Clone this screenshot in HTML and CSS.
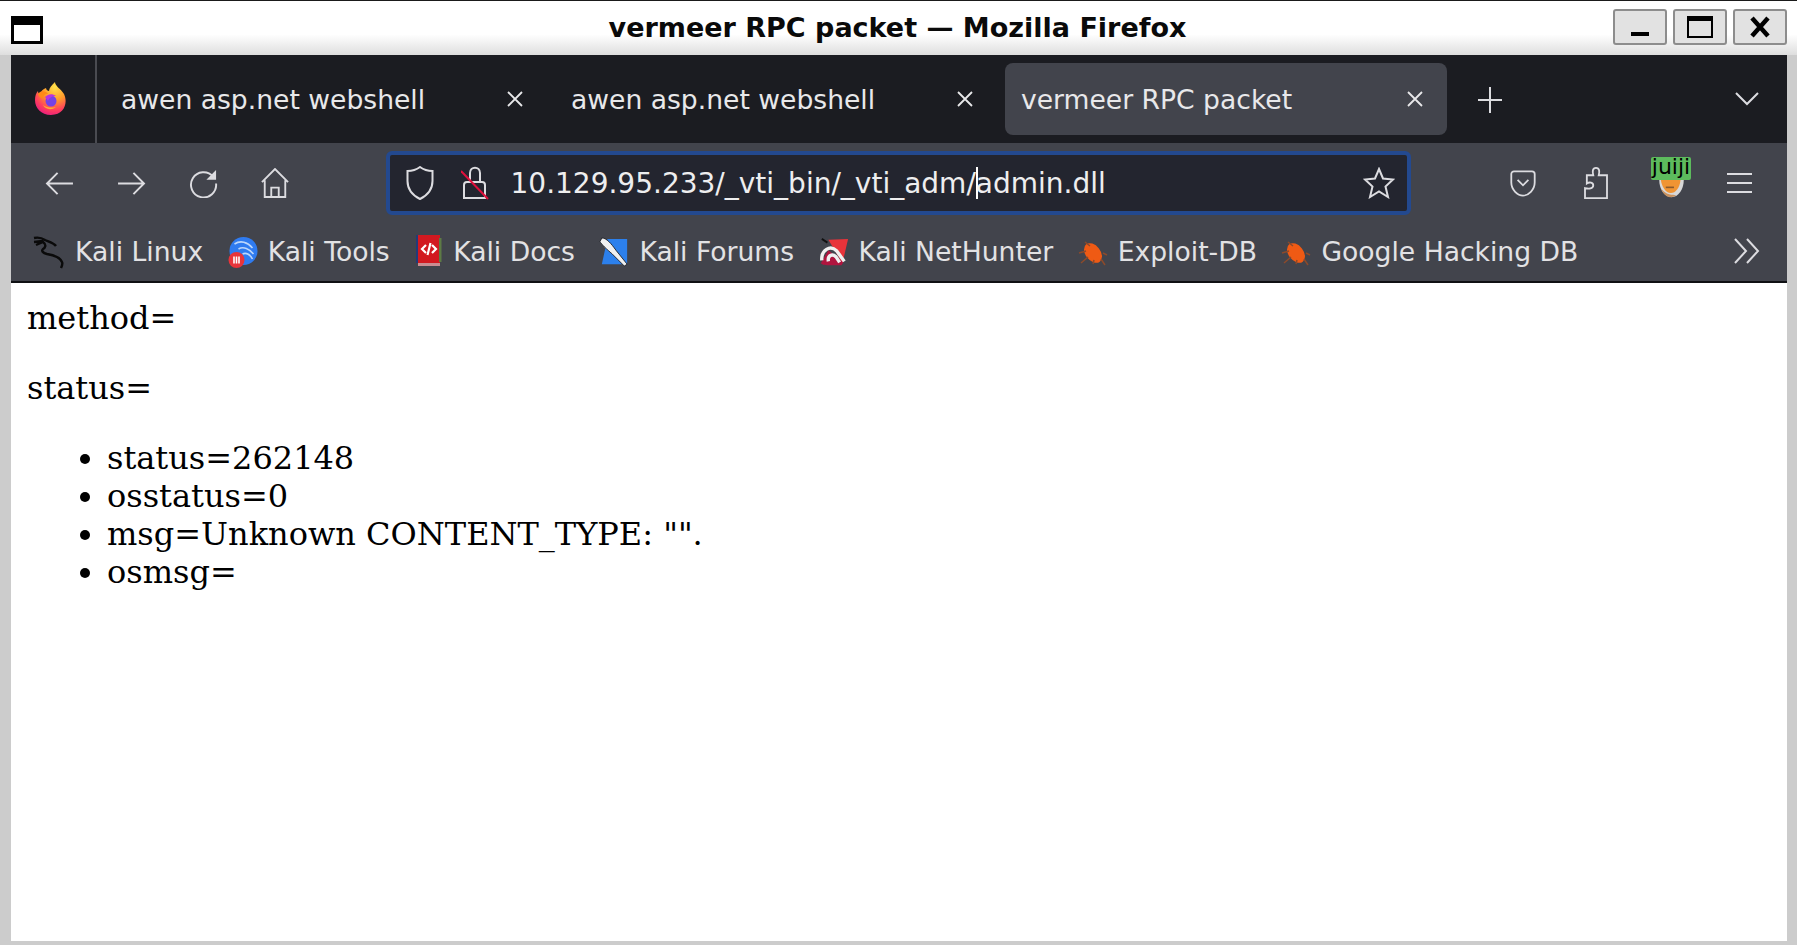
FILE: index.html
```html
<!DOCTYPE html>
<html lang="en">
<head>
<meta charset="utf-8">
<title>vermeer RPC packet — Mozilla Firefox</title>
<link rel="stylesheet" href="styles.css">
</head>
<body>
<header class="titlebar">
  <div class="win-menu"></div>
  <div class="win-title">vermeer RPC packet — Mozilla Firefox</div>
  <div class="win-buttons">
    <button class="win-btn"><span class="g-min"></span></button>
    <button class="win-btn"><span class="g-max"></span></button>
    <button class="win-btn"><svg width="20" height="22" viewBox="0 0 20 22"><path d="M2 2 L18 20 M18 2 L2 20" stroke="#000" stroke-width="4.5" fill="none"/></svg></button>
  </div>
</header>
<div class="window">
  <div class="tabbar">
    <div class="ff-btn">
      <svg width="32" height="34" viewBox="0 0 32 34">
        <defs>
          <radialGradient id="ffa" cx="0.65" cy="0.15" r="0.95"><stop offset="0" stop-color="#ffe24a"/><stop offset="0.42" stop-color="#ff9a2a"/><stop offset="0.75" stop-color="#ff3d5e"/><stop offset="1" stop-color="#e31587"/></radialGradient>
        </defs>
        <path d="M20 0 C20 4 26 7 29 12 C33 20 30 33 16 33 C6 33 0 26 0 18 C0 14 1 11 3 9 C3 11 4 12 5 12 C6 9 8 7 11 6 C11 8 13 9 14 9 C14 6 17 3 20 0Z" fill="url(#ffa)"/>
        <path d="M3 12 C6 8 11 9 13 12 C9 12 8 14 8 17 C6 16 4 15 3 12Z" fill="#ff8a16"/>
        <circle cx="16" cy="19" r="5.500" fill="#7542e5"/>
        <path d="M10 15 C13 12 17 11 21 14 C17 14 14 16 13 19Z" fill="#b833e1"/>
        <path d="M8 23 C10 27 16 29 21 25 C17 26 12 26 8 23Z" fill="#ffb02e"/>
      </svg>
    </div>
    <div class="tab"><span class="tab-label">awen asp.net webshell</span><svg class="tab-x" width="16" height="16" viewBox="0 0 16 16"><path d="M1 1 L15 15 M15 1 L1 15"/></svg></div>
    <div class="tab"><span class="tab-label">awen asp.net webshell</span><svg class="tab-x" width="16" height="16" viewBox="0 0 16 16"><path d="M1 1 L15 15 M15 1 L1 15"/></svg></div>
    <div class="tab tab-active"><span class="tab-label">vermeer RPC packet</span><svg class="tab-x" width="16" height="16" viewBox="0 0 16 16"><path d="M1 1 L15 15 M15 1 L1 15"/></svg></div>
    <svg class="newtab ico" width="24" height="26" viewBox="0 0 24 26"><path d="M12 0 V26 M0 13 H24"/></svg>
    <svg class="tablist ico" width="24" height="14" viewBox="0 0 24 14"><path d="M1 1 L12 12 L23 1"/></svg>
  </div>

  <div class="toolbar">
    <div class="nav-btn"><svg class="ico" width="29" height="25" viewBox="0 0 30 26"><path d="M29 13 H2 M13 2 L2 13 L13 24"/></svg></div>
    <div class="nav-btn"><svg class="ico" width="29" height="25" viewBox="0 0 30 26"><path d="M1 13 H28 M17 2 L28 13 L17 24"/></svg></div>
    <div class="nav-btn"><svg class="ico" width="29" height="29" viewBox="0 0 30 30"><path d="M25 8 A13 13 0 1 0 28 15"/><path class="fill" d="M28 1 V11 H18Z"/></svg></div>
    <div class="nav-btn"><svg class="ico" width="28" height="30" viewBox="0 0 30 32"><path d="M1 15 L15 1 L29 15 M4 13 V31 H26 V13 M11 31 V21 H19 V31"/></svg></div>
    <div class="urlbar">
      <svg class="ico shield" width="28" height="34" viewBox="0 0 28 34"><path d="M14 1 C10 4 5 5 1.500 5 V15 C1.500 24 8 30 14 33 C20 30 26.500 24 26.500 15 V5 C23 5 18 4 14 1Z"/></svg>
      <svg class="ico lock" width="28" height="34" viewBox="0 0 28 34"><path d="M9 17 V7 C9 0 19 0 19 7 V17"/><path d="M3 19 C3 17 4 16 6 16 H21 C23 16 24 17 24 19 V32 H3Z"/><path class="slash" d="M0 5 L27 33"/></svg>
      <span class="url-text">10.129.95.233/_vti_bin/_vti_adm/<span class="caret"></span>admin.dll</span>
      <svg class="ico star" width="32" height="32" viewBox="0 0 32 32"><path d="M16 2 L20 11.500 L30 12.500 L22.500 19.500 L25 30 L16 24.500 L7 30 L9.500 19.500 L2 12.500 L12 11.500Z"/></svg>
    </div>
    <div class="right-icons">
      <svg class="ico" width="28" height="27" viewBox="0 0 28 30"><path d="M4 1.500 H24 A3 3 0 0 1 27 4.500 V14 C27 22 20 28.500 14 28.500 C8 28.500 1 22 1 14 V4.500 A3 3 0 0 1 4 1.500Z"/><path d="M8 11 L14 17 L20 11"/></svg>
      <svg class="ico ext" width="28" height="33" viewBox="0 0 28 36"><path d="M14 1 C10 1 10 5 11 9 H4 V18 C7 16 11 17 11 20 C11 24 6 24 2 23 V34 H26 V9 H17 C18 5 18 1 14 1Z"/></svg>
      <div class="juji">
        <span class="juji-badge">juiji</span>
        <svg class="juji-bowl" width="31" height="18" viewBox="0 0 32 22"><path d="M1 0 H31 C31 12 24 21 16 21 C8 21 1 12 1 0Z" fill="#d8d8d8"/><path d="M3 0 H27 C26 10 21 16 15 16 C9 16 4 8 3 0Z" fill="#f09433"/><path d="M9 9 H19" stroke="#8a5a2c" stroke-width="2"/><path d="M14 21 C9 20 5 16 3 10 C7 15 11 18 18 18 L22 19 C20 20 17 21 14 21Z" fill="#c9925f"/></svg>
      </div>
      <svg class="ico ham" width="25" height="22" viewBox="0 0 25 22"><path d="M0 2 H25 M0 11 H25 M0 20 H25"/></svg>
    </div>
  </div>

  <div class="bookmarks">
    <a class="bm">
      <svg class="bm-ico" width="32" height="34" viewBox="0 0 32 34"><path d="M1 3 C6 2 9 3 12 5 C17 7 21 8 23 11 M1 7 L10 6 M3 10 L10 7 C14 10 12 13 10 14 C8 16 10 18 14 19 C20 20 27 22 29 27 C30 29 29 31 28 33" fill="none" stroke="#0a0a0a" stroke-width="2.400"/></svg>
      <span>Kali Linux</span>
    </a>
    <a class="bm">
      <svg class="bm-ico" width="30" height="32" viewBox="0 0 29 32"><circle cx="15" cy="15" r="14" fill="#2f7bf0"/><path d="M6 8 C12 4 19 6 24 12 M10 13 C15 10 21 13 25 18 M14 18 C18 16 22 19 24 23" stroke="#bcd7fb" stroke-width="1.600" fill="none"/><circle cx="8" cy="24" r="8" fill="#e8343a"/><path d="M5.500 20.500 V27.500 M8 20.500 V27.500 M10.500 20.500 V27.500" stroke="#fff" stroke-width="1.600"/></svg>
      <span>Kali Tools</span>
    </a>
    <a class="bm">
      <svg class="bm-ico" width="29" height="33" viewBox="-2 0 29 33"><rect x="0" y="0" width="2.500" height="28" fill="#233a78"/><rect x="2" y="0" width="22" height="28" fill="#d21920"/><rect x="23" y="3" width="2.500" height="24" fill="#5d7a45"/><rect x="2" y="28" width="22" height="3" fill="#c98d92"/><path d="M10 10 L6 14 L10 18 M16 10 L20 14 L16 18 M14.500 8 L11.500 20" stroke="#fff" stroke-width="2.200" fill="none"/></svg>
      <span>Kali Docs</span>
    </a>
    <a class="bm">
      <svg class="bm-ico" width="30" height="30" viewBox="0 0 32 32"><path d="M9 2 H30 V29 H3 Z" fill="#2c80ec"/><path d="M3 1 C8 1 13 7 18 14 L30 29 L27 31 L14 18 C8 13 3 8 1 5Z" fill="#f0f0f0" stroke="#24262c" stroke-width="1"/></svg>
      <span>Kali Forums</span>
    </a>
    <a class="bm">
      <svg class="bm-ico" width="30" height="30" viewBox="0 0 32 32"><path d="M10 3 L31 2 L25 28 Z" fill="#e8333a"/><path d="M2 28 C4 31 14 30 24 30 L26 27 L10 14 Z" fill="#b0153f"/><path d="M3 25 C2 14 12 8 19 15 L27 26" fill="none" stroke="#f0f0f0" stroke-width="3.600"/><path d="M10 26 C9 20 14 17 18 21 L22 27" fill="none" stroke="#f0f0f0" stroke-width="3.600"/><path d="M3 2 L9 6" stroke="#111" stroke-width="2"/></svg>
      <span>Kali NetHunter</span>
    </a>
    <a class="bm">
      <svg class="bm-ico" width="30" height="30" viewBox="0 0 30 30"><ellipse cx="15" cy="16" rx="7.500" ry="11" transform="rotate(-38 15 16)" fill="#ef5a14"/><path d="M7 5 L12 9 M1 16 L8 14 M3 26 L10 20 M15 27 L16 23 M25 16 L29 18 M23 22 L27 28" stroke="#8c4a2b" stroke-width="1.500"/></svg>
      <span>Exploit-DB</span>
    </a>
    <a class="bm">
      <svg class="bm-ico" width="30" height="30" viewBox="0 0 30 30"><ellipse cx="15" cy="16" rx="7.500" ry="11" transform="rotate(-38 15 16)" fill="#ef5a14"/><path d="M7 5 L12 9 M1 16 L8 14 M3 26 L10 20 M15 27 L16 23 M25 16 L29 18 M23 22 L27 28" stroke="#8c4a2b" stroke-width="1.500"/></svg>
      <span>Google Hacking DB</span>
    </a>
    <svg class="ico bm-more" width="26" height="26" viewBox="0 0 26 26"><path d="M1 1 L12 13 L1 25 M13 1 L24 13 L13 25"/></svg>
  </div>

  <main class="page">
    <p>method=</p>
    <p>status=</p>
    <ul>
      <li>status=262148</li>
      <li>osstatus=0</li>
      <li>msg=Unknown CONTENT_TYPE: "".</li>
      <li>osmsg=</li>
    </ul>
  </main>
</div>
</body>
</html>
```
FILE: styles.css
```css
* { box-sizing: border-box; }
html, body { margin: 0; height: 945px; overflow: hidden; }
body { background: #cccccc; display: flex; flex-direction: column; font-family: "DejaVu Sans", sans-serif; }

.titlebar { position: relative; flex: 0 0 55px; display: flex; align-items: center; padding: 0 10px 0 11px; border-top: 1px solid #1a1a1a; background: linear-gradient(#ffffff 0, #ffffff 62%, #dedede 100%); }
.win-menu { width: 32px; height: 28px; margin-top: 3px; border: 3px solid #000; border-top-width: 9px; background: #fff; flex: none; }
.win-title { flex: 1; text-align: center; font-size: 27px; font-weight: 700; color: #0a0a0a; margin: -2px 0 0 139px; white-space: nowrap; }
.win-buttons { display: flex; gap: 6px; margin-top: -2px; flex: none; }
.win-btn { width: 54px; height: 36px; padding: 0; display: flex; align-items: center; justify-content: center; background: #e2e2e2; border: 2px solid #8d8d8d; border-radius: 3px; }
.g-min { width: 18px; height: 4px; background: #000; margin-top: 14px; }
.g-max { width: 26px; height: 22px; border: 2px solid #000; border-top-width: 5px; }

.window { flex: 1; margin: 0 10px 4px 11px; display: flex; flex-direction: column; background: #fff; min-height: 0; }

.ico { fill: none; stroke: #dcdce0; stroke-width: 2; flex: none; }
.ico .fill { fill: #dcdce0; stroke: none; }

.tabbar { flex: 0 0 88px; display: flex; align-items: flex-start; background: #1b1c21; color: #e8e8ea; }
.ff-btn { width: 86px; height: 88px; flex: none; display: flex; align-items: center; justify-content: center; border-right: 2px solid #4a4b51; padding-right: 4px; }
.tab { width: 442px; height: 72px; margin: 8px 0 0 8px; padding: 0 24px 0 16px; flex: none; display: flex; align-items: center; justify-content: space-between; border-radius: 8px; font-size: 26.600px; white-space: nowrap; }
.tab-active { background: #42444c; }
.tab-x { fill: none; stroke: #e8e8ea; stroke-width: 1.800; flex: none; }
.newtab { margin: 32px 0 0 31px; }
.tablist { margin: 37px 0 0 233px; }

.toolbar { flex: 0 0 79px; display: flex; align-items: flex-start; padding: 8px 0 0 12px; background: #42444c; }
.nav-btn { width: 72px; height: 64px; flex: none; display: flex; align-items: center; justify-content: center; }
.urlbar { width: 1025px; height: 64px; margin-left: 75px; flex: none; display: flex; align-items: center; padding: 0 12px 0 16px; background: #23252f; border: 4px solid #23498f; border-radius: 6px; color: #eeeeef; font-size: 28px; }
.lock { margin-left: 27px; }
.lock .slash { stroke: #e0103c; }
.url-text { margin-left: 21.500px; flex: 1; white-space: nowrap; }
.caret { display: inline-block; width: 2px; height: 32px; background: #fff; vertical-align: -6px; margin-right: -2px; }
.right-icons { flex: 1; display: flex; align-items: center; height: 64px; padding-left: 98px; }
.ext { margin-left: 45px; }
.juji { position: relative; width: 44px; height: 46px; margin: -6px 0 0 39px; flex: none; }
.juji-badge { position: absolute; left: 2px; top: 0; z-index: 1; width: 40px; height: 23px; background: #5dbb5d; border-radius: 2px; color: #000; font-size: 22px; line-height: 20px; text-align: center; white-space: nowrap; }
.juji-bowl { position: absolute; left: 7px; top: 23px; }
.ham { margin-left: 34px; }

.bookmarks { flex: 0 0 61px; display: flex; align-items: center; padding: 0 0 0 22px; background: #42444c; border-bottom: 2px solid #0f1013; font-size: 26.600px; color: #e2e2e4; position: relative; }
.bm { display: flex; align-items: center; gap: 10px; margin-right: 24.500px; flex: none; white-space: nowrap; }
.bm-ico { flex: none; }
.bm-more { position: absolute; left: 1723px; top: 16px; }

.page { flex: 1; padding: 16px; color: #000; background: #fff; font-family: "DejaVu Serif", serif; font-size: 32px; line-height: 38px; }
.page p { margin: 0 0 32px; }
.page ul { margin: 0; padding-left: 80px; }
```
